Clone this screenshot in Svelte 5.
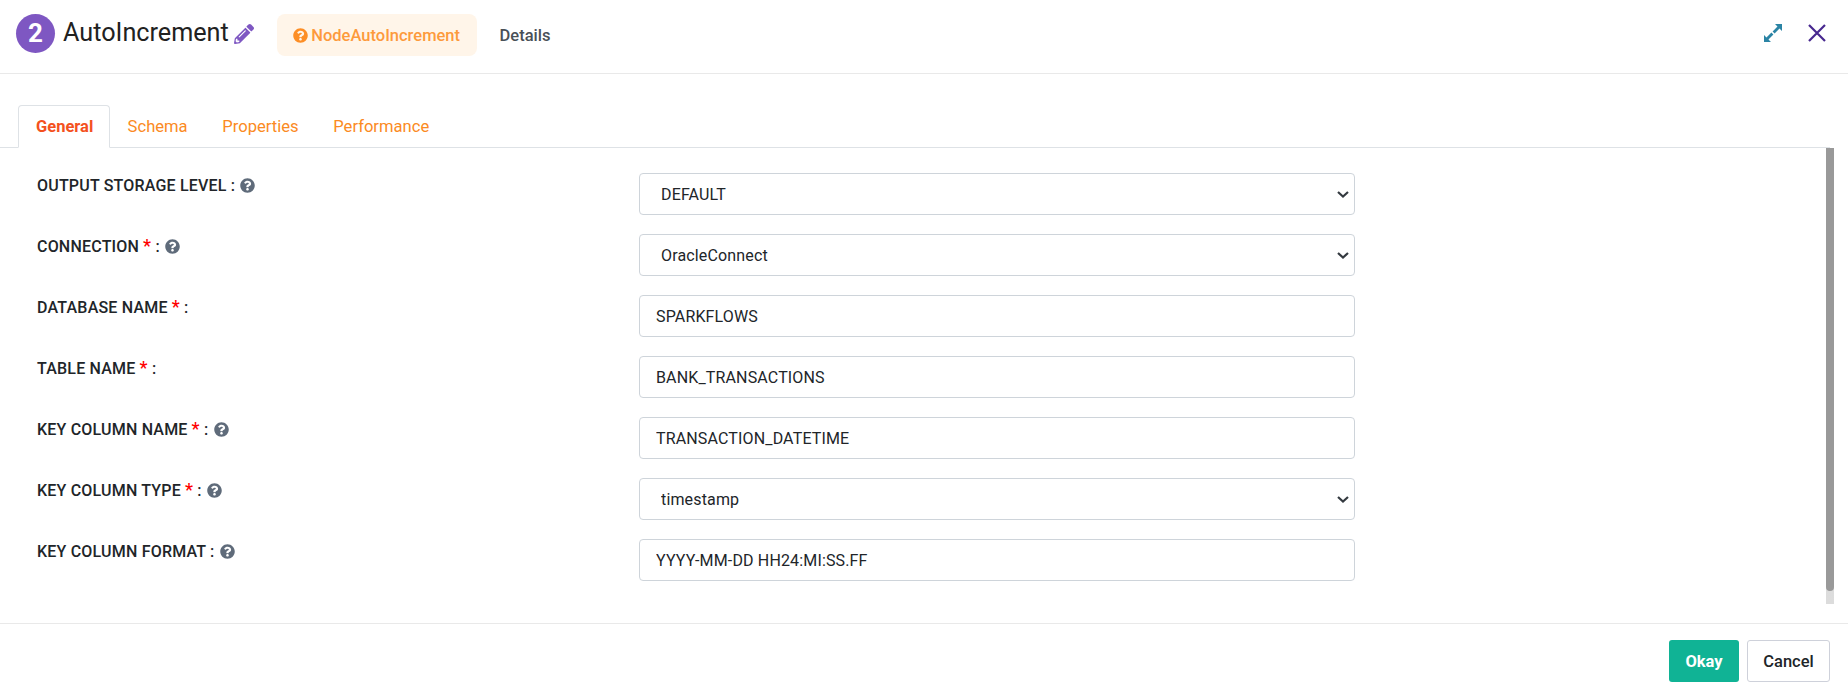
<script>
	const help = 'M504 256c0 136.997-111.043 248-248 248S8 392.997 8 256C8 119.083 119.043 8 256 8s248 111.083 248 248zM262.655 90c-54.497 0-89.255 22.957-116.549 63.758-3.536 5.286-2.353 12.415 2.715 16.258l34.699 26.31c5.205 3.947 12.621 3.008 16.665-2.122 17.864-22.658 30.113-35.797 57.303-35.797 20.429 0 45.698 13.148 45.698 32.958 0 14.976-12.363 22.667-32.534 33.976C247.128 238.528 216 254.941 216 296v4c0 6.627 5.373 12 12 12h56c6.627 0 12-5.373 12-12v-1.333c0-28.462 83.186-29.647 83.186-106.667 0-58.002-60.165-102-116.531-102zM256 338c-25.365 0-46 20.635-46 46 0 25.364 20.635 46 46 46s46-20.636 46-46c0-25.365-20.635-46-46-46z';
	const pencil = 'M497.9 142.1l-46.1 46.1c-4.7 4.7-12.3 4.7-17 0l-111-111c-4.7-4.7-4.7-12.3 0-17l46.1-46.1c18.7-18.7 49.1-18.7 67.9 0l60.1 60.1c18.8 18.7 18.8 49.1 0 67.9zM284.2 99.8L21.6 362.4.4 483.9c-2.9 16.4 11.4 30.6 27.8 27.8l121.5-21.3 262.6-262.6c4.7-4.7 4.7-12.3 0-17l-111-111c-4.8-4.7-12.4-4.7-17.1 0zM124.1 339.9c-5.5-5.5-5.5-14.3 0-19.8l154-154c5.5-5.5 14.3-5.5 19.8 0s5.5 14.3 0 19.8l-154 154c-5.5 5.5-14.3 5.5-19.8 0zM88 424h48v36.3l-64.5 11.3-31.1-31.1L51.7 376H88v48z';

	const tabs = ['General', 'Schema', 'Properties', 'Performance'];

	const fields = [
		{ label: 'OUTPUT STORAGE LEVEL', hint: true, type: 'select', value: 'DEFAULT' },
		{ label: 'CONNECTION', required: true, hint: true, type: 'select', value: 'OracleConnect' },
		{ label: 'DATABASE NAME', required: true, type: 'text', value: 'SPARKFLOWS' },
		{ label: 'TABLE NAME', required: true, type: 'text', value: 'BANK_TRANSACTIONS' },
		{ label: 'KEY COLUMN NAME', required: true, hint: true, type: 'text', value: 'TRANSACTION_DATETIME' },
		{ label: 'KEY COLUMN TYPE', required: true, hint: true, type: 'select', value: 'timestamp' },
		{ label: 'KEY COLUMN FORMAT', hint: true, type: 'text', value: 'YYYY-MM-DD HH24:MI:SS.FF' }
	];
</script>

<div class="modal">
	<header class="head">
		<span class="step">2</span>
		<h1>AutoIncrement</h1>
		<svg class="edit" viewBox="0 0 512 512"><path d={pencil} /></svg>
		<span class="pill">
			<svg class="pill-icon" viewBox="0 0 512 512"><path d={help} /></svg>
			NodeAutoIncrement
		</span>
		<span class="details">Details</span>
		<div class="actions">
			<svg class="expand" viewBox="0 0 18 18">
				<path d="M11 0H18V7L15.500 4.500 10.600 9.400 8.600 7.400 13.500 2.500z" />
				<path d="M7 18H0V11L2.500 13.500 7.400 8.600 9.400 10.600 4.500 15.500z" />
			</svg>
			<svg class="close" viewBox="0 0 18 18">
				<path d="M1 1l16 16M17 1L1 17" />
			</svg>
		</div>
	</header>

	<nav class="tabs">
		{#each tabs as tab, i}
			<span class="tab" class:active={i === 0}>{tab}</span>
		{/each}
	</nav>

	<div class="body">
		<form class="fields">
			{#each fields as field}
				<div class="row">
					<div class="label">
						{field.label}{#if field.required}<span class="req">*</span>{/if} :
						{#if field.hint}
							<svg class="hint" viewBox="0 0 512 512"><path d={help} /></svg>
						{/if}
					</div>
					{#if field.type === 'select'}
						<select class="control picker">
							<option>{field.value}</option>
						</select>
					{:else}
						<input class="control" type="text" value={field.value} />
					{/if}
				</div>
			{/each}
		</form>
		<div class="scrollbar"><div class="thumb"></div></div>
	</div>

	<footer class="foot">
		<button class="btn okay" type="button">Okay</button>
		<button class="btn cancel" type="button">Cancel</button>
	</footer>
</div>

<style>
	:global(body) {
		background: #fff;
		font-family: Roboto, sans-serif;
		color: #212529;
	}

	.modal {
		width: 1848px;
		height: 693px;
		display: flex;
		flex-direction: column;
		overflow: hidden;
	}

	.head {
		height: 74px;
		box-sizing: border-box;
		flex: none;
		display: flex;
		align-items: center;
		padding: 0 22px 7px 16px;
		border-bottom: 1px solid #e9e9e9;
	}

	.step {
		width: 39px;
		height: 39px;
		border-radius: 50%;
		background: #7e57c2;
		color: #fff;
		font-size: 26px;
		font-weight: 700;
		display: flex;
		align-items: center;
		justify-content: center;
		margin-right: 8px;
	}

	h1 {
		margin: 0;
		font-size: 25.2px;
		font-weight: 400;
		line-height: 36px;
		color: #212121;
	}

	.edit {
		width: 20px;
		height: 20px;
		fill: #7e57c2;
		margin: 2px 0 0 5px;
	}

	.pill {
		display: flex;
		align-items: center;
		gap: 3px;
		height: 42px;
		margin: 4px 0 0 23px;
		padding: 0 16.5px;
		border-radius: 8px;
		background: #fff5e9;
		color: #fd9a3c;
		font-size: 16.5px;
		font-weight: 500;
	}

	.pill-icon {
		width: 15px;
		height: 15px;
		fill: #fd8e25;
	}

	.details {
		margin: 4px 0 0 23px;
		font-size: 16.5px;
		font-weight: 500;
		color: #495057;
	}

	.actions {
		margin-left: auto;
		display: flex;
		align-items: center;
		gap: 26px;
	}

	.expand {
		width: 18px;
		height: 18px;
		fill: #2b84a5;
	}

	.close {
		width: 18px;
		height: 18px;
		fill: none;
		stroke: #47288f;
		stroke-width: 2.2;
	}

	.tabs {
		flex: none;
		display: flex;
		box-sizing: border-box;
		height: 43px;
		margin: 31px 18px 0 0;
		padding-left: 18px;
		border-bottom: 1px solid #dee2e6;
		font-size: 16.6px;
		color: #fb8a23;
	}

	.tab {
		display: flex;
		align-items: center;
		padding: 0 17.3px;
		height: 43px;
		box-sizing: border-box;
	}

	.tab.active {
		color: #f4511e;
		font-size: 16.5px;
		font-weight: 700;
		background: #fff;
		border: 1px solid #dee2e6;
		border-bottom-color: #fff;
		border-radius: 4px 4px 0 0;
		padding: 0 16px 0 17px;
	}

	.body {
		flex: 1;
		display: flex;
		min-height: 0;
	}

	.fields {
		width: 1355px;
		padding: 25px 0 0 37px;
		box-sizing: border-box;
		display: flex;
		flex-direction: column;
		gap: 19px;
	}

	.row {
		display: grid;
		grid-template-columns: 602px 716px;
		height: 42px;
	}

	.label {
		font-size: 16px;
		font-weight: 500;
		line-height: 24px;
		letter-spacing: 0.2px;
		padding-top: 1px;
		color: #212529;
	}

	.req {
		color: #f00;
		margin-left: 4px;
		font-size: 18px;
		line-height: 1;
	}

	.hint {
		width: 15px;
		height: 15px;
		fill: #5f6b7a;
		vertical-align: -2px;
		margin-left: 1px;
	}

	.control {
		box-sizing: border-box;
		height: 42px;
		width: 716px;
		border: 1px solid #ced4da;
		border-radius: 4px;
		background-color: #fff;
		padding: 0 16px;
		font-family: Roboto, sans-serif;
		font-size: 16px;
		letter-spacing: 0.15px;
		color: #212529;
		outline: none;
		margin: 0;
	}

	.picker {
		appearance: none;
		padding-left: 21px;
		background-image: url("data:image/svg+xml,%3Csvg xmlns='http://www.w3.org/2000/svg' viewBox='0 0 12 7'%3E%3Cpath d='M1 1l5 4.500L11 1' fill='none' stroke='%23343a40' stroke-width='2.200'/%3E%3C/svg%3E");
		background-repeat: no-repeat;
		background-position: right 5px center;
		background-size: 12px 7px;
	}

	.scrollbar {
		width: 8px;
		margin-left: auto;
		margin-right: 14px;
		display: flex;
		flex-direction: column;
		height: 456px;
		background: linear-gradient(#e8e8e8, #dcdcdc);
	}

	.thumb {
		flex: none;
		height: 443px;
		background: #999;
		border-radius: 0 0 4px 4px;
	}

	.foot {
		margin-top: auto;
		height: 70px;
		box-sizing: border-box;
		flex: none;
		display: flex;
		justify-content: flex-end;
		align-items: flex-start;
		gap: 8px;
		padding: 16px 18px 0 0;
		border-top: 1px solid #e9e9e9;
	}

	.btn {
		height: 42px;
		border-radius: 3px;
		font-family: Roboto, sans-serif;
		font-size: 16.5px;
		box-sizing: border-box;
		cursor: pointer;
	}

	.okay {
		width: 70px;
		border: none;
		background: #10b395;
		color: #fff;
		font-weight: 700;
	}

	.cancel {
		width: 83px;
		border: 1px solid #ced1da;
		background: #fff;
		color: #212529;
		font-weight: 500;
	}
</style>
